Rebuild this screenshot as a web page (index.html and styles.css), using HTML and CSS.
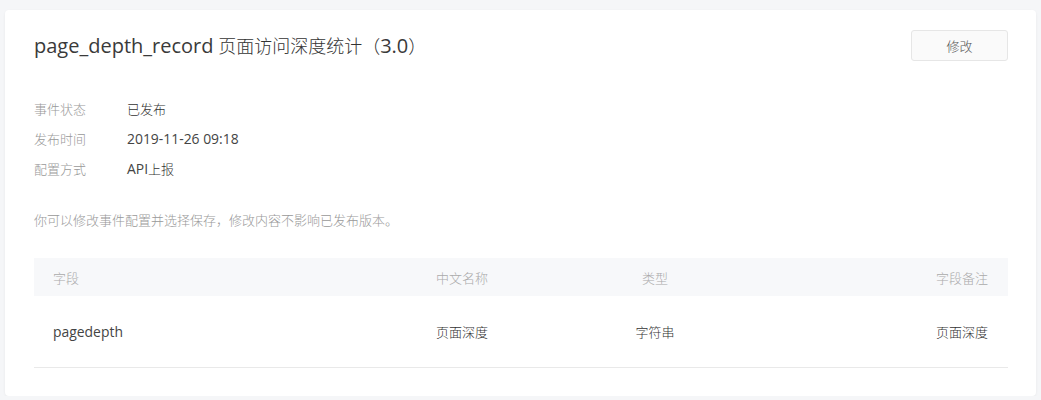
FILE: index.html
```html
<!DOCTYPE html>
<html lang="zh-CN">
<head>
<meta charset="utf-8">
<title>page_depth_record</title>
<link rel="stylesheet" href="styles.css">
</head>
<body>
<div class="page">
  <div class="card">
    <div class="head">
      <h1 class="title"><span class="en">page_depth_record</span> 页面访问深度统计（<span class="en">3.0</span>）</h1>
      <button class="btn" type="button">修改</button>
    </div>
    <dl class="info">
      <div class="info-row"><dt>事件状态</dt><dd>已发布</dd></div>
      <div class="info-row"><dt>发布时间</dt><dd><span class="en">2019-11-26 09:18</span></dd></div>
      <div class="info-row"><dt>配置方式</dt><dd><span class="en">API</span>上报</dd></div>
    </dl>
    <p class="note">你可以修改事件配置并选择保存，修改内容不影响已发布版本。</p>
    <div class="table">
      <div class="tr th">
        <div class="c1">字段</div>
        <div class="c2">中文名称</div>
        <div class="c3">类型</div>
        <div class="c4">字段备注</div>
      </div>
      <div class="tr td">
        <div class="c1"><span class="en">pagedepth</span></div>
        <div class="c2">页面深度</div>
        <div class="c3">字符串</div>
        <div class="c4">页面深度</div>
      </div>
    </div>
  </div>
</div>
</body>
</html>
```
FILE: styles.css
```css
html, body {
  margin: 0;
  padding: 0;
}
body {
  background: #f5f6f8;
  font-family: "Open Sans", "Noto Sans CJK SC", sans-serif;
  font-weight: 300;
  color: #333;
}
.en {
  font-size: 1.07em;
  font-weight: 400;
  color: #444;
}
.page {
  padding: 10px 5px 0 5px;
}
.card {
  background: #fff;
  border-radius: 4px;
  box-shadow: 0 1px 3px rgba(0, 0, 0, 0.06);
  padding: 20px 28px 28px 29px;
}
.head {
  display: flex;
  align-items: center;
  justify-content: space-between;
  height: 31px;
}
.title {
  margin: 0;
  font-size: 18px;
  font-weight: 300;
  line-height: 31px;
  color: #333;
}
.title .en {
  font-size: 20px;
  color: #3a3a3a;
}
.btn {
  width: 97px;
  height: 31px;
  background: #fafafa;
  border: 1px solid #e6e6e6;
  border-radius: 3px;
  font-family: "Open Sans", "Noto Sans CJK SC", sans-serif;
  font-weight: 300;
  font-size: 13px;
  color: #555;
  padding: 0;
}
.info {
  margin: 33px 0 0 0;
}
.info-row {
  display: flex;
  height: 30px;
  line-height: 30px;
  font-size: 13px;
}
.info-row dt {
  width: 93px;
  color: #999;
}
.info-row dd {
  margin: 0;
  color: #333;
}
.note {
  margin: 26px 0 0 0;
  font-size: 13px;
  line-height: 20px;
  color: #999;
}
.table {
  margin-top: 28px;
  font-size: 13px;
}
.tr {
  display: grid;
  grid-template-columns: 382px 174px 130px 1fr;
  align-items: center;
}
.th {
  height: 38px;
  background: #f7f8fa;
  color: #aaa;
}
.td {
  height: 71px;
  border-bottom: 1px solid #e9e9e9;
  color: #333;
}
.c1 {
  padding-left: 19px;
}
.c2 {
  padding-left: 20px;
}
.c3 {
  text-align: center;
}
.c4 {
  text-align: right;
  padding-right: 20px;
}
```
